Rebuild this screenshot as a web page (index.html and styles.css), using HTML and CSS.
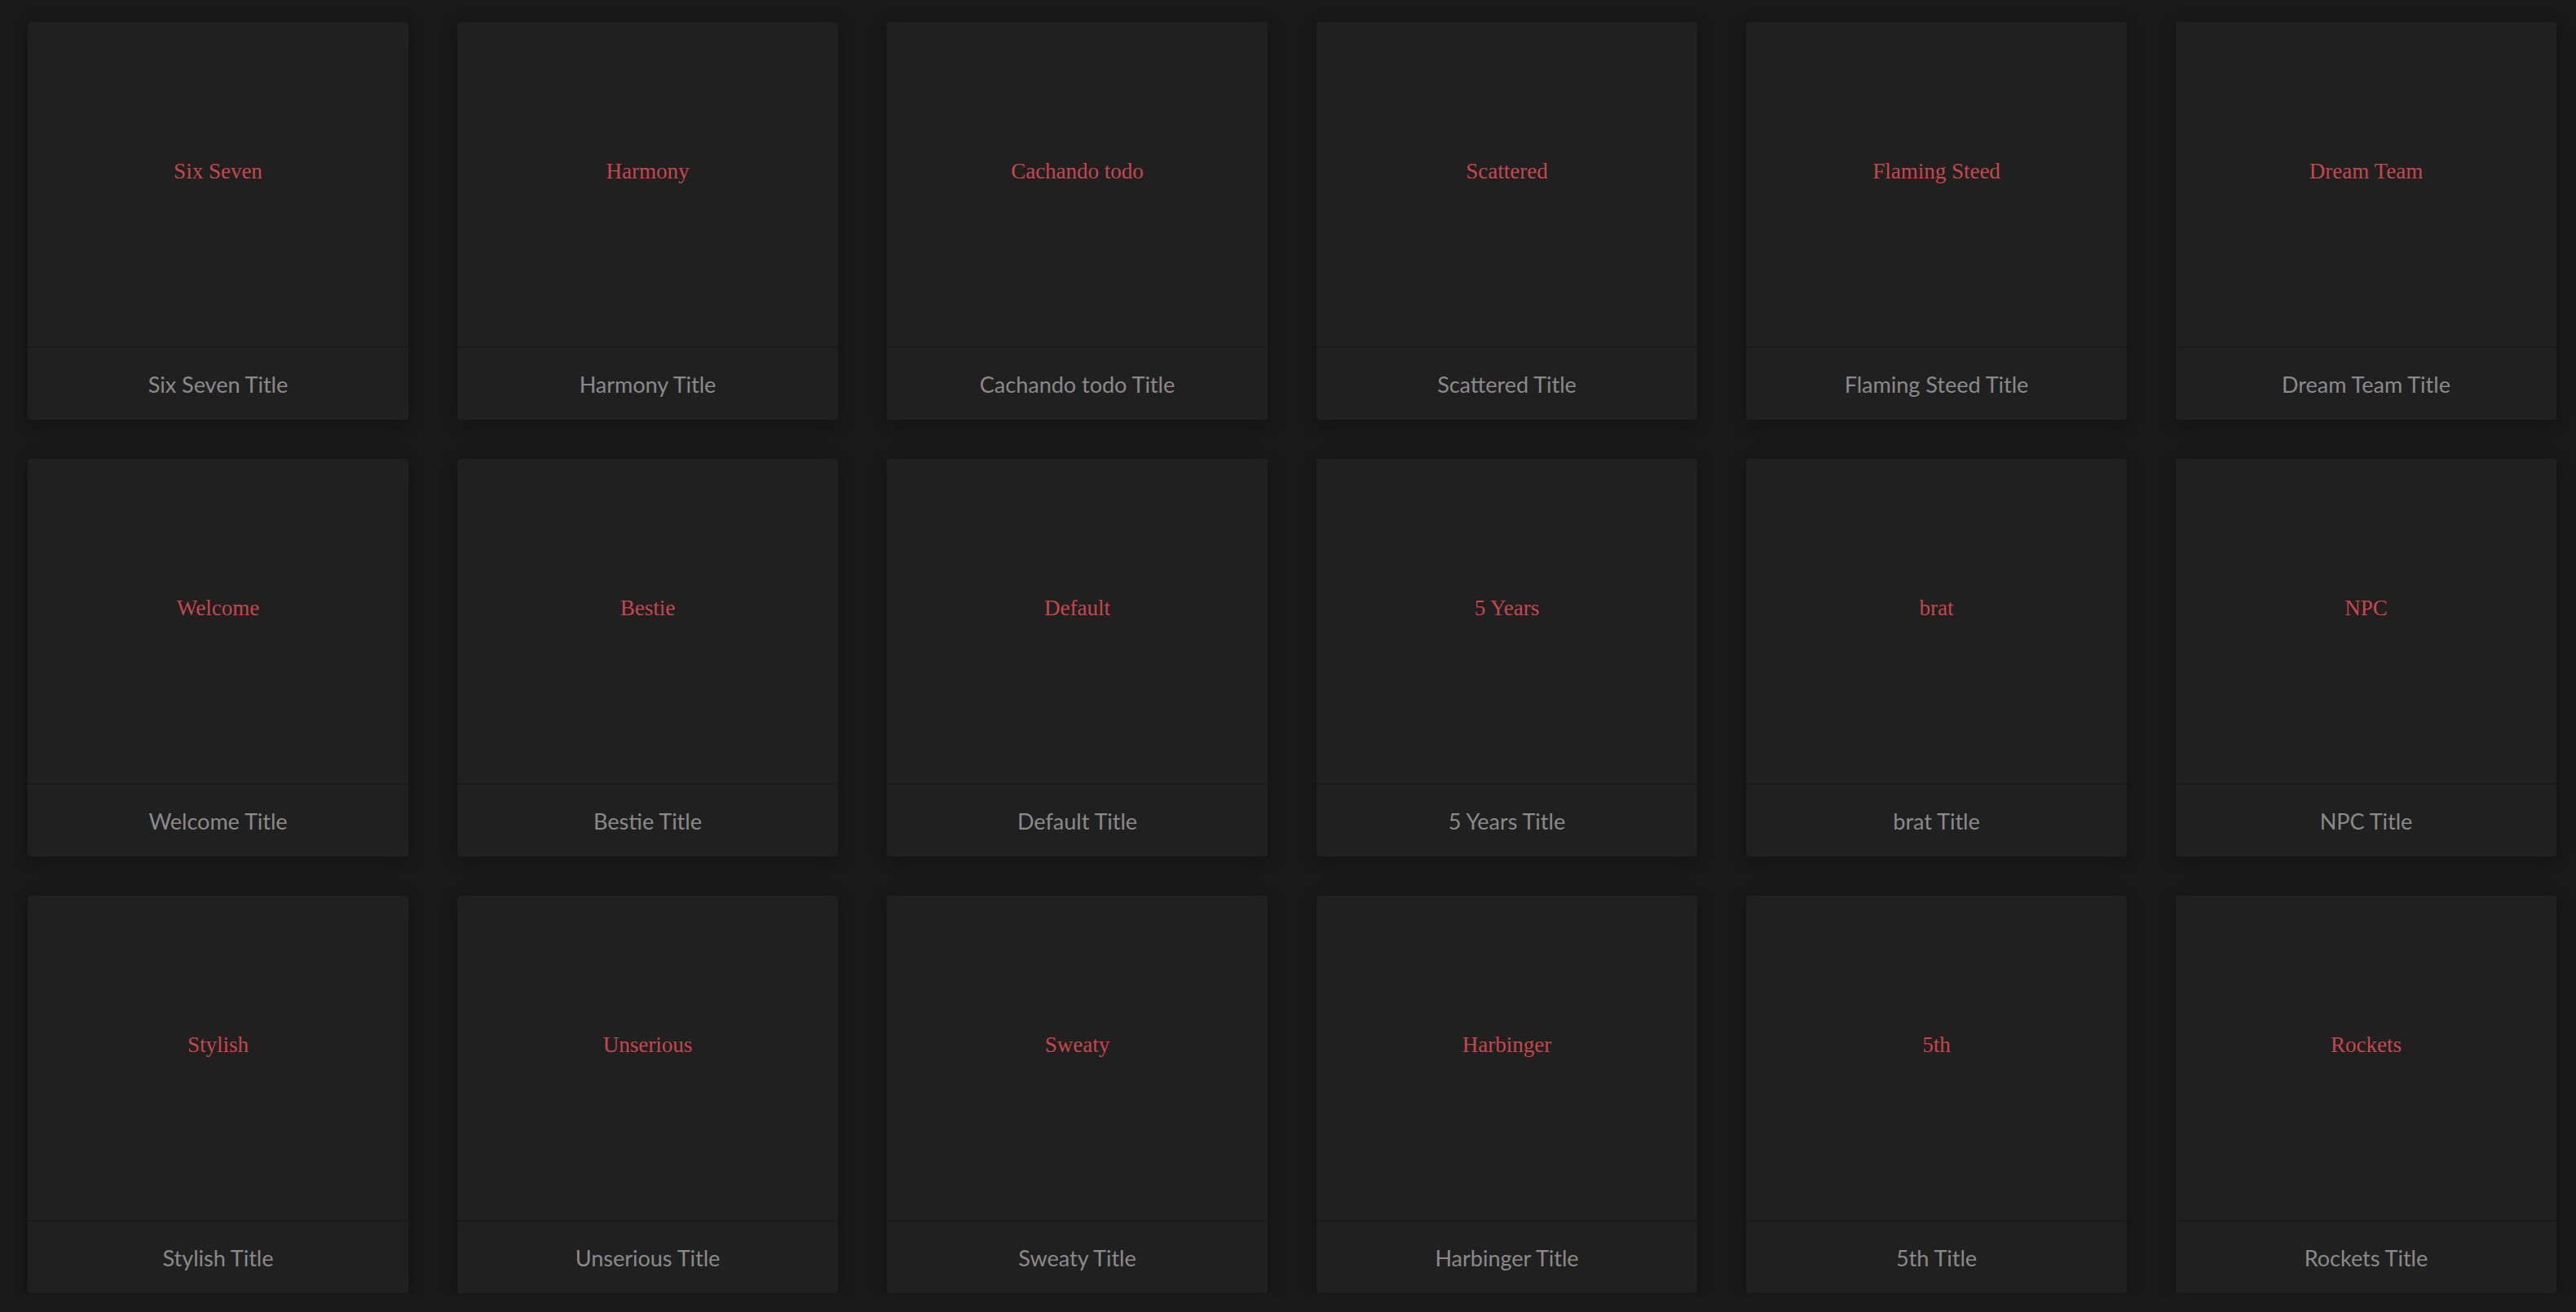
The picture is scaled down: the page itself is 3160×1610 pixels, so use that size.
FILE: index.html
```html
<!DOCTYPE html>
<html lang="en">
<head>
    <meta charset="UTF-8">
    <meta name="viewport" content="width=device-width, initial-scale=1.0">
    <title>Themes</title>
    <link rel="stylesheet" href="styles.css">
</head>
<body>
    <div id="grid">
        <div class="card"><div class="preview">Six Seven</div><div class="title">Six Seven Title</div></div>
        <div class="card"><div class="preview">Harmony</div><div class="title">Harmony Title</div></div>
        <div class="card"><div class="preview">Cachando todo</div><div class="title">Cachando todo Title</div></div>
        <div class="card"><div class="preview">Scattered</div><div class="title">Scattered Title</div></div>
        <div class="card"><div class="preview">Flaming Steed</div><div class="title">Flaming Steed Title</div></div>
        <div class="card"><div class="preview">Dream Team</div><div class="title">Dream Team Title</div></div>

        <div class="card"><div class="preview">Welcome</div><div class="title">Welcome Title</div></div>
        <div class="card"><div class="preview">Bestie</div><div class="title">Bestie Title</div></div>
        <div class="card"><div class="preview">Default</div><div class="title">Default Title</div></div>
        <div class="card"><div class="preview">5 Years</div><div class="title">5 Years Title</div></div>
        <div class="card"><div class="preview">brat</div><div class="title">brat Title</div></div>
        <div class="card"><div class="preview">NPC</div><div class="title">NPC Title</div></div>

        <div class="card"><div class="preview">Stylish</div><div class="title">Stylish Title</div></div>
        <div class="card"><div class="preview">Unserious</div><div class="title">Unserious Title</div></div>
        <div class="card"><div class="preview">Sweaty</div><div class="title">Sweaty Title</div></div>
        <div class="card"><div class="preview">Harbinger</div><div class="title">Harbinger Title</div></div>
        <div class="card"><div class="preview">5th</div><div class="title">5th Title</div></div>
        <div class="card"><div class="preview">Rockets</div><div class="title">Rockets Title</div></div>
    </div>
</body>
</html>
```

FILE: styles.css
```css
body{
    margin:0;
    background-color:#1a191a;
    font-family:"Liberation Serif", serif;
}

#grid{
    display:grid;
    grid-template-columns:repeat(6, 467px);
    column-gap:60px;
    row-gap:48px;
    padding:27px 0 0 34px;
}

.card{
    height:488px;
    display:flex;
    flex-direction:column;
    background-color:#212021;
    border-radius:4px;
    box-shadow:0 4px 18px rgba(0, 0, 0, 0.28);
    overflow:hidden;
}

.preview{
    height:400px;
    box-sizing:border-box;
    padding-bottom:31px;
    display:flex;
    align-items:center;
    justify-content:center;
    border-bottom:2px solid #1c1b1c;
    color:#c8464e;
    font-size:27px;
}

.title{
    flex:1;
    display:flex;
    align-items:center;
    justify-content:center;
    color:#8b8a8b;
    font-family:Lato, "Open Sans", sans-serif;
    font-size:27px;
}
```
